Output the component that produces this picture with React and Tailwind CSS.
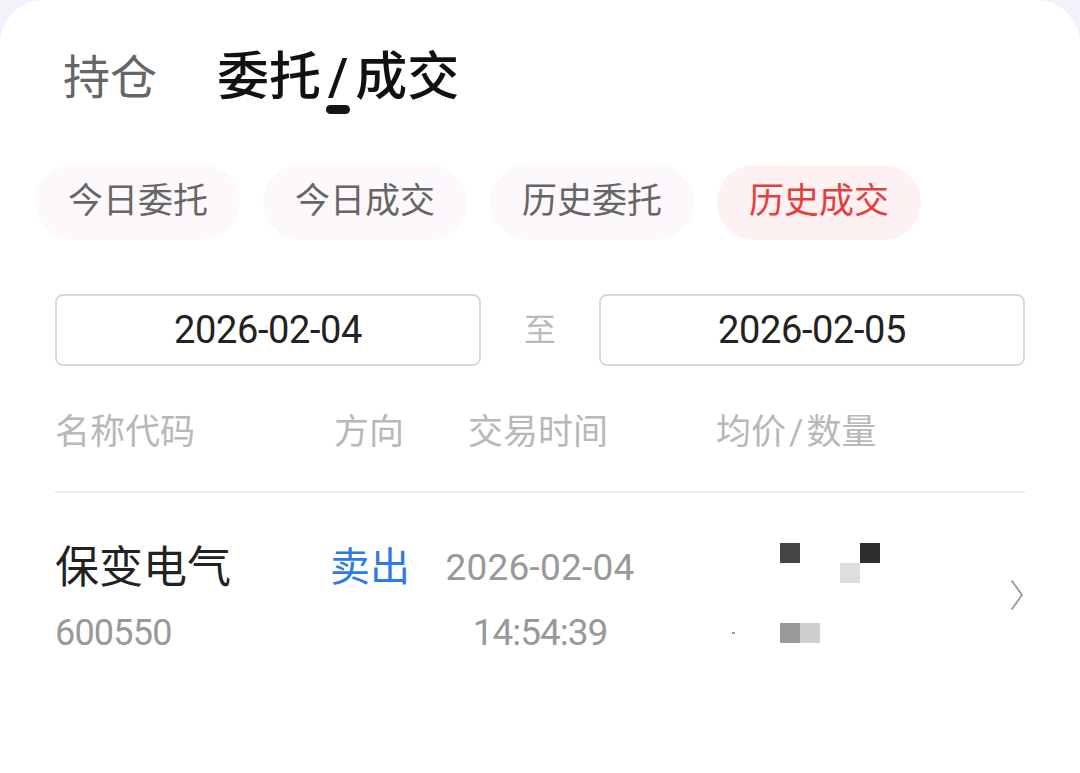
import React from "react";

const chips = [
  { label: "今日委托", active: false },
  { label: "今日成交", active: false },
  { label: "历史委托", active: false },
  { label: "历史成交", active: true },
];

export default function App() {
  return (
    <div className="min-h-[773px] w-[1080px] bg-[#f2f2fb] font-['Roboto','Noto_Sans_CJK_SC',sans-serif]">
      <div className="min-h-[773px] bg-white rounded-t-[44px] pt-[40px]">
        {/* Top tabs */}
        <div className="flex items-center h-[75px] pl-[63px] gap-[60px]">
          <span className="text-[47px] leading-none text-[#666666]">持仓</span>
          <span className="relative text-[52px] leading-none font-medium text-[#111111]">
            委托<span className="mx-[7px]">/</span>成交
            <span className="absolute left-1/2 -translate-x-1/2 top-[53px] w-[24px] h-[9px] rounded-full bg-[#151515]" />
          </span>
        </div>

        {/* Filter chips */}
        <div className="flex gap-[23px] pl-[36px] mt-[50px]">
          {chips.map((c) => (
            <div
              key={c.label}
              className={
                c.active
                  ? "w-[204px] h-[75px] rounded-full bg-[#fdf1f1] text-[#e53e40] text-[35px] flex items-center justify-center"
                  : "w-[204px] h-[75px] rounded-full bg-[#fcf8fc] text-[#666666] text-[35px] flex items-center justify-center"
              }
            >
              {c.label}
            </div>
          ))}
        </div>

        {/* Date range */}
        <div className="flex items-center px-[55px] mt-[54px]">
          <div className="w-[426px] h-[72px] border-2 border-[#d9d9d9] rounded-[8px] flex items-center justify-center text-[38px] tracking-[-0.4px] text-[#222222]">
            2026-02-04
          </div>
          <div className="flex-1 text-center text-[32px] text-[#bbbbbb]">至</div>
          <div className="w-[426px] h-[72px] border-2 border-[#d9d9d9] rounded-[8px] flex items-center justify-center text-[38px] tracking-[-0.4px] text-[#222222]">
            2026-02-05
          </div>
        </div>

        {/* Header */}
        <div className="flex items-center h-[75px] mt-[30px] pl-[55px] text-[35px] text-[#b8b8b8]">
          <div className="w-[275px]">名称代码</div>
          <div className="w-[110px] pl-[4px]">方向</div>
          <div className="w-[200px] text-center pr-[4px]">交易时间</div>
          <div className="pl-[76px]">均价<span className="mx-[3px]">/</span>数量</div>
        </div>

        <div className="mx-[55px] mt-[20px] h-[2px] bg-[#eeeeee]" />

        {/* Row */}
        <div className="flex items-center pl-[55px] pr-[56px] pt-[45px]">
          <div className="w-[275px] flex flex-col">
            <div className="h-[60px] flex items-center text-[44px] text-[#222222]">保变电气</div>
            <div className="h-[50px] mt-[10px] flex items-center text-[36px] tracking-[-0.8px] text-[#999999]">600550</div>
          </div>
          <div className="w-[110px] flex flex-col">
            <div className="h-[60px] flex items-center text-[40px] text-[#2f7be5]">卖出</div>
            <div className="h-[50px] mt-[10px]" />
          </div>
          <div className="w-[200px] flex flex-col">
            <div className="h-[60px] flex items-center justify-center text-[37px] tracking-[0.2px] text-[#999999]">2026-02-04</div>
            <div className="h-[50px] mt-[10px] flex items-center justify-center text-[37px] tracking-[-1px] text-[#999999]">14:54:39</div>
          </div>
          <div className="flex-1 flex flex-col">
            <div className="h-[60px] pt-[5px]">
              <div className="flex">
                <div className="ml-[140px] w-[20px] h-[20px] bg-[#444444]" />
                <div className="ml-[60px] w-[20px] h-[20px] bg-[#2e2e2e]" />
              </div>
              <div className="flex">
                <div className="ml-[200px] w-[20px] h-[20px] bg-[#dedede]" />
              </div>
            </div>
            <div className="h-[50px] mt-[10px] flex items-center">
              <div className="ml-[92px] w-[3px] h-[2px] bg-[#999999]" />
              <div className="ml-[45px] w-[20px] h-[20px] bg-[#9a999b]" />
              <div className="w-[20px] h-[20px] bg-[#cfcfcf]" />
            </div>
          </div>
          <svg width="14" height="32" viewBox="0 0 14 32" className="shrink-0 -mt-[6px]">
            <path d="M2 2 L12 16 L2 30" fill="none" stroke="#9a9a9a" strokeWidth="1.8" strokeLinecap="round" strokeLinejoin="round" />
          </svg>
        </div>
      </div>
    </div>
  );
}
